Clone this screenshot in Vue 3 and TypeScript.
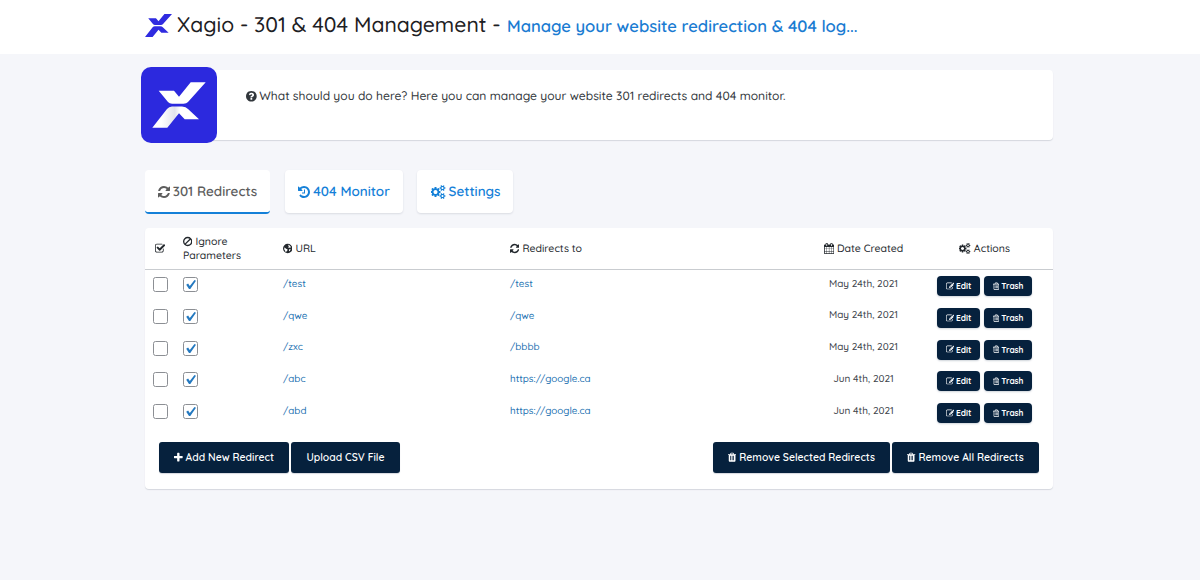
<script setup lang="ts">
import { h, type FunctionalComponent } from 'vue'

interface Glyph { box: string; d: string; ratio: number }

const glyphs: Record<string, Glyph> = {
  refresh: { box: '128 0 1536 1792', ratio: 0.857, d: 'M1639 1056q0 5-1 7-64 268-268 434.5t-478 166.5q-146 0-282.5-55t-243.5-157l-129 129q-19 19-45 19t-45-19-19-45v-448q0-26 19-45t45-19h448q26 0 45 19t19 45-19 45l-137 137q71 66 161 102t187 36q134 0 250-65t186-179q11-17 53-117 8-23 30-23h192q13 0 22.5 9.5t9.5 22.5zm25-800v448q0 26-19 45t-45 19h-448q-26 0-45-19t-19-45 19-45l138-138q-148-137-349-137-134 0-250 65t-186 179q-11 17-53 117-8 23-30 23h-199q-13 0-22.5-9.5t-9.5-22.5v-7q65-268 270-434.5t480-166.5q146 0 284 55.5t245 156.5l130-129q19-19 45-19t45 19 19 45z' },
  history: { box: '128 0 1536 1792', ratio: 0.857, d: 'M1664 896q0 156-61 298t-164 245-245 164-298 61q-172 0-327-72.5t-264-204.5q-7-10-6.5-22.5t8.5-20.5l137-138q10-9 25-9 16 2 23 12 73 95 179 147t225 52q104 0 198.5-40.5t163.5-109.5 109.5-163.5 40.5-198.5-40.5-198.5-109.5-163.5-163.5-109.5-198.5-40.5q-98 0-188 35.5t-160 101.5l137 138q31 30 14 69-17 40-59 40h-448q-26 0-45-19t-19-45v-448q0-42 40-59 39-17 69 14l130 129q107-101 244.5-156.5t284.5-55.5q156 0 298 61t245 164 164 245 61 298zm-640-288v448q0 14-9 23t-23 9h-320q-14 0-23-9t-9-23v-64q0-14 9-23t23-9h224v-352q0-14 9-23t23-9h64q14 0 23 9t9 23z' },
  cogs: { box: '0 0 1920 1792', ratio: 1.071, d: 'M832 896q0-106-75-181t-181-75-181 75-75 181 75 181 181 75 181-75 75-181zm768 512q0-52-38-90t-90-38-90 38-38 90q0 53 37.5 90.5t90.5 37.5 90.5-37.5 37.5-90.5zm0-1024q0-52-38-90t-90-38-90 38-38 90q0 53 37.5 90.5t90.5 37.5 90.5-37.5 37.5-90.5zm-384 421v185q0 10-7 19.5t-16 10.5l-155 24q-11 35-32 76 34 48 90 115 7 11 7 20 0 12-7 19-23 30-82.5 89.5t-78.5 59.5q-11 0-21-7l-115-90q-37 19-77 31-11 108-23 155-7 24-30 24h-186q-11 0-20-7.5t-10-17.5l-23-153q-34-10-75-31l-118 89q-7 7-20 7-11 0-21-8-144-133-144-160 0-9 7-19 10-14 41-53t47-61q-23-44-35-82l-152-24q-10-1-17-9.5t-7-19.5v-185q0-10 7-19.5t16-10.5l155-24q11-35 32-76-34-48-90-115-7-11-7-20 0-12 7-20 22-30 82-89t79-59q11 0 21 7l115 90q34-18 77-32 11-108 23-154 7-24 30-24h186q11 0 20 7.5t10 17.5l23 153q34 10 75 31l118-89q8-7 20-7 11 0 21 8 144 133 144 160 0 8-7 19-12 16-42 54t-45 60q23 48 34 82l152 23q10 2 17 10.5t7 19.5zm640 533v140q0 16-149 31-12 27-30 52 51 113 51 138 0 4-4 7-122 71-124 71-8 0-46-47t-52-68q-20 2-30 2t-30-2q-14 21-52 68t-46 47q-2 0-124-71-4-3-4-7 0-25 51-138-18-25-30-52-149-15-149-31v-140q0-16 149-31 13-29 30-52-51-113-51-138 0-4 4-7 4-2 35-20t59-34 30-16q8 0 46 46.5t52 67.5q20-2 30-2t30 2q51-71 92-112l6-2q4 0 124 70 4 3 4 7 0 25-51 138 17 23 30 52 149 15 149 31zm0-1024v140q0 16-149 31-12 27-30 52 51 113 51 138 0 4-4 7-122 71-124 71-8 0-46-47t-52-68q-20 2-30 2t-30-2q-14 21-52 68t-46 47q-2 0-124-71-4-3-4-7 0-25 51-138-18-25-30-52-149-15-149-31v-140q0-16 149-31 13-29 30-52-51-113-51-138 0-4 4-7 4-2 35-20t59-34 30-16q8 0 46 46.5t52 67.5q20-2 30-2t30 2q51-71 92-112l6-2q4 0 124 70 4 3 4 7 0 25-51 138 17 23 30 52 149 15 149 31z' },
  question: { box: '128 0 1536 1792', ratio: 0.857, d: 'M1024 1376v-192q0-14-9-23t-23-9h-192q-14 0-23 9t-9 23v192q0 14 9 23t23 9h192q14 0 23-9t9-23zm256-672q0-88-55.5-163t-138.5-116-170-41q-243 0-371 213-15 24 8 42l132 100q7 6 19 6 16 0 25-12 53-68 86-92 34-24 86-24 48 0 85.5 26t37.5 59q0 38-20 61t-68 45q-63 28-115.5 86.5t-52.5 125.5v36q0 14 9 23t23 9h192q14 0 23-9t9-23q0-19 21.5-49.5t54.5-49.5q32-18 49-28.5t46-35 44.5-48 28-60.5 12.5-81zm384 192q0 209-103 385.5t-279.5 279.5-385.5 103-385.5-103-279.5-279.5-103-385.5 103-385.5 279.5-279.5 385.5-103 385.5 103 279.5 279.5 103 385.5z' },
  checked: { box: '64 0 1664 1792', ratio: 0.929, d: 'M1472 930v318q0 119-84.5 203.5t-203.5 84.5h-832q-119 0-203.5-84.5t-84.5-203.5v-832q0-119 84.5-203.5t203.5-84.5h832q63 0 117 25 15 7 18 23 3 17-9 29l-49 49q-10 10-23 10-3 0-9-2-23-6-45-6h-832q-66 0-113 47t-47 113v832q0 66 47 113t113 47h832q66 0 113-47t47-113v-254q0-13 9-22l64-64q10-10 23-10 6 0 12 3 20 8 20 29zm231-489l-814 814q-24 24-57 24t-57-24l-430-430q-24-24-24-57t24-57l110-110q24-24 57-24t57 24l263 263 647-647q24-24 57-24t57 24l110 110q24 24 24 57t-24 57z' },
  ban: { box: '128 0 1536 1792', ratio: 0.857, d: 'M896 128a768 768 0 1 0 0 1536a768 768 0 1 0 0-1536zM896 347c115 0 220 35 308 95l-764 762c-58-88-93-194-93-308c0-303 246-549 549-549zM1354 592c58 86 91 190 91 304c0 303-246 549-549 549c-113 0-217-33-304-91z' },
  globe: { box: '128 0 1536 1792', ratio: 0.857, d: 'M896 128a768 768 0 1 0 0 1536a768 768 0 1 0 0-1536zM1010 270l190 60-50 90 100 20 110 140 90 120-110 10-50 90-100-50-130 60-60-130 80-110-90-120zM330 750l190 50 90 120 170 40 100 130-70 160-120 90-30 150-140-80-60-200-110-120zM1190 960l180 40-20 110-130 190-100 60-20-190z' },
  calendar: { box: '64 0 1664 1792', ratio: 0.929, d: 'M192 1664h288v-288h-288v288zm352 0h320v-288h-320v288zm-352-352h288v-320h-288v320zm352 0h320v-320h-320v320zm-352-384h288v-288h-288v288zm736 736h320v-288h-320v288zm-384-736h320v-288h-320v288zm768 736h288v-288h-288v288zm-384-352h320v-320h-320v320zm-352-864v-288q0-13-9.5-22.5t-22.5-9.5h-64q-13 0-22.5 9.5t-9.5 22.5v288q0 13 9.5 22.5t22.5 9.5h64q13 0 22.5-9.5t9.5-22.5zm736 864h288v-320h-288v320zm-384-384h320v-288h-320v288zm384 0h288v-288h-288v288zm32-480v-288q0-13-9.5-22.5t-22.5-9.5h-64q-13 0-22.5 9.5t-9.5 22.5v288q0 13 9.5 22.5t22.5 9.5h64q13 0 22.5-9.5t9.5-22.5zm384-64v1280q0 52-38 90t-90 38h-1408q-52 0-90-38t-38-90v-1280q0-52 38-90t90-38h128v-96q0-66 47-113t113-47h64q66 0 113 47t47 113v96h384v-96q0-66 47-113t113-47h64q66 0 113 47t47 113v96h128q52 0 90 38t38 90z' },
  edit: { box: '0 0 1792 1792', ratio: 1, d: 'M888 1184l116-116-152-152-116 116v56h96v96h56zm440-720q-16-16-33 1l-350 350q-17 17-1 33t33-1l350-350q17-17 1-33zm80 594v190q0 119-84.5 203.5t-203.5 84.5h-832q-119 0-203.5-84.5t-84.5-203.5v-832q0-119 84.5-203.5t203.5-84.5h832q63 0 117 25 15 7 18 23 3 17-9 29l-49 49q-14 14-32 8-23-6-45-6h-832q-66 0-113 47t-47 113v832q0 66 47 113t113 47h832q66 0 113-47t47-113v-126q0-13 9-22l64-64q15-15 35-7t20 29zm-96-738l288 288-672 672h-288v-288zm444 132l-92 92-288-288 92-92q28-28 68-28t68 28l152 152q28 28 28 68t-28 68z' },
  trashOutline: { box: '192 0 1408 1792', ratio: 0.786, d: 'M704 736v576q0 14-9 23t-23 9h-64q-14 0-23-9t-9-23v-576q0-14 9-23t23-9h64q14 0 23 9t9 23zm256 0v576q0 14-9 23t-23 9h-64q-14 0-23-9t-9-23v-576q0-14 9-23t23-9h64q14 0 23 9t9 23zm256 0v576q0 14-9 23t-23 9h-64q-14 0-23-9t-9-23v-576q0-14 9-23t23-9h64q14 0 23 9t9 23zm128 724v-948h-896v948q0 22 7 40.5t14.5 27 10.5 8.5h832q3 0 10.5-8.5t14.5-27 7-40.5zm-672-1076h448l-48-117q-7-9-17-11h-317q-10 2-17 11zm928 32v64q0 14-9 23t-23 9h-96v948q0 83-47 143.5t-113 60.5h-832q-66 0-113-58.5t-47-141.5v-952h-96q-14 0-23-9t-9-23v-64q0-14 9-23t23-9h309l70-167q15-37 54-63t79-26h320q40 0 79 26t54 63l70 167h309q14 0 23 9t9 23z' },
  trash: { box: '192 0 1408 1792', ratio: 0.786, d: 'M704 1376v-704q0-14-9-23t-23-9h-64q-14 0-23 9t-9 23v704q0 14 9 23t23 9h64q14 0 23-9t9-23zm256 0v-704q0-14-9-23t-23-9h-64q-14 0-23 9t-9 23v704q0 14 9 23t23 9h64q14 0 23-9t9-23zm256 0v-704q0-14-9-23t-23-9h-64q-14 0-23 9t-9 23v704q0 14 9 23t23 9h64q14 0 23-9t9-23zm-544-992h448l-48-117q-7-9-17-11h-317q-10 2-17 11zm928 32v64q0 14-9 23t-23 9h-96v948q0 83-47 143.5t-113 60.5h-832q-66 0-113-58.5t-47-141.5v-952h-96q-14 0-23-9t-9-23v-64q0-14 9-23t23-9h309l70-167q15-37 54-63t79-26h320q40 0 79 26t54 63l70 167h309q14 0 23 9t9 23z' },
  plus: { box: '192 0 1408 1792', ratio: 0.786, d: 'M1600 736v192q0 40-28 68t-68 28h-416v416q0 40-28 68t-68 28h-192q-40 0-68-28t-28-68v-416h-416q-40 0-68-28t-28-68v-192q0-40 28-68t68-28h416v-416q0-40 28-68t68-28h192q40 0 68 28t28 68v416h416q40 0 68 28t28 68z' },
}

const Icon: FunctionalComponent<{ name: string; size: number }> = (props) => {
  const g = glyphs[props.name]
  return h('svg', { viewBox: g.box, width: props.size * g.ratio, height: props.size, fill: 'currentColor' },
    [h('path', { d: g.d, 'fill-rule': 'evenodd' })])
}
Icon.props = ['name', 'size']

const rows = [
  { url: '/test', target: '/test', date: 'May 24th, 2021' },
  { url: '/qwe', target: '/qwe', date: 'May 24th, 2021' },
  { url: '/zxc', target: '/bbbb', date: 'May 24th, 2021' },
  { url: '/abc', target: 'https://google.ca', date: 'Jun 4th, 2021' },
  { url: '/abd', target: 'https://google.ca', date: 'Jun 4th, 2021' },
]
</script>

<template>
  <div class="page">
    <header class="topbar">
      <svg class="mark" width="27" height="23" viewBox="11.3 15.3 53.4 45.4" preserveAspectRatio="none">
        <path fill="#2f2be0" d="M49.7 15.3H64.7L47 35Q45.500 37 42.500 37H31Q28.500 37 27 35L17.700 23.700H33L38 29.700ZM11.300 60.700L26 42Q28 39.500 31 39.500H41Q45 39.500 47 42L58 52.300H43.700L38 46.300L26.300 60.700Z" />
      </svg>
      <h1 class="title">Xagio - 301 &amp; 404 Management -</h1>
      <span class="subtitle">Manage your website redirection &amp; 404 log...</span>
    </header>

    <main class="content">
      <section class="intro">
        <svg class="tile" width="76" height="76" viewBox="0 0 76 76">
          <defs>
            <linearGradient id="fold" x1="0" y1="0" x2="1" y2="0">
              <stop offset="0.2" stop-color="#fff" />
              <stop offset="0.48" stop-color="#e2e3ec" />
              <stop offset="0.6" stop-color="#fff" />
            </linearGradient>
          </defs>
          <rect width="76" height="76" rx="10" fill="#2c29de" />
          <path fill="#fff" d="M49.700 15.300H64.700L47 35Q45.500 36.800 42.500 36.800H31Q28.500 36.800 27 35L17.700 23.700H33L38 29.700Z" />
          <path fill="url(#fold)" d="M11.300 60.700L26 42Q28 39.500 31 39.500H41Q45 39.500 47 42L58 52.300H43.700L38 46.300L26.300 60.700Z" />
        </svg>
        <p class="intro-text"><Icon name="question" :size="12.500" /><span>What should you do here? Here you can manage your website 301 redirects and 404 monitor.</span></p>
      </section>

      <nav class="tabs">
        <a class="tab tab-redirects"><Icon name="refresh" :size="14" /><span>301 Redirects</span></a>
        <a class="tab tab-monitor"><Icon name="history" :size="14" /><span>404 Monitor</span></a>
        <a class="tab tab-settings"><Icon name="cogs" :size="14" /><span>Settings</span></a>
      </nav>

      <section class="panel">
        <div class="line head">
          <div class="cell pick"><Icon name="checked" :size="11" /></div>
          <div class="cell ignore"><span class="pair"><Icon name="ban" :size="11" />Ignore</span><span>Parameters</span></div>
          <div class="cell"><Icon name="globe" :size="11" /><span>URL</span></div>
          <div class="cell"><Icon name="refresh" :size="11" /><span>Redirects to</span></div>
          <div class="cell mid"><Icon name="calendar" :size="11" /><span>Date Created</span></div>
          <div class="cell mid"><Icon name="cogs" :size="11" /><span>Actions</span></div>
        </div>
        <div v-for="(row, i) in rows" :key="i" class="line row">
          <div class="cell pick"><i class="box"></i></div>
          <div class="cell"><i class="box"><svg width="13" height="13" viewBox="0 0 13 13"><path d="M2.200 6.700L4.100 5.600L5.800 7.900L10.500 1.900L12 2.800L6.300 11H5Z" fill="#2479c0" /></svg></i></div>
          <div class="cell link">{{ row.url }}</div>
          <div class="cell link">{{ row.target }}</div>
          <div class="cell mid date">{{ row.date }}</div>
          <div class="cell mid acts">
            <button class="mini edit"><Icon name="edit" :size="8.500" /><span>Edit</span></button>
            <button class="mini del"><Icon name="trashOutline" :size="8.500" /><span>Trash</span></button>
          </div>
        </div>
        <footer class="foot">
          <button class="btn add"><Icon name="plus" :size="11" /><span>Add New Redirect</span></button>
          <button class="btn upload"><span>Upload CSV File</span></button>
          <button class="btn selected"><Icon name="trash" :size="10.500" /><span>Remove Selected Redirects</span></button>
          <button class="btn all"><Icon name="trash" :size="10.500" /><span>Remove All Redirects</span></button>
        </footer>
      </section>
    </main>
  </div>
</template>

<style>
body { background: #f5f6fa; }
</style>

<style scoped>
.page {
  width: 1200px;
  height: 580px;
  overflow: hidden;
  background: #f5f6fa;
  color: #23282d;
  font-family: Quicksand, Lato, "Open Sans", sans-serif;
  font-weight: 500;
  white-space: nowrap;
  text-rendering: geometricPrecision;
}
.page * { box-sizing: border-box; }
svg { flex: none; display: block; }
.topbar { height: 54px; background: #fff; display: flex; align-items: center; padding: 0 0 4px 145px; }
.mark { margin-right: 5px; }
.title { margin: 0; width: 330px; font-size: 21.2px; font-weight: 500; line-height: 28px; color: #1d2023; }
.subtitle { font-size: 16.63px; font-weight: 600; line-height: 22px; color: #1a7cd2; padding-top: 3px; }
.content { width: 908px; margin: 16px 0 0 145px; }
.intro { height: 70px; background: #fff; border-radius: 4px; box-shadow: 0 1px 1px #d5d8de; display: flex; }
.tile { margin: -3px 0 0 -4px; }
.intro-text { display: flex; align-items: center; gap: 2.5px; height: 20px; margin: 16px 0 0 29px; font-size: 12.08px; color: #32373c; }
.tabs { display: flex; margin-top: 30px; height: 43px; }
.tab { display: flex; align-items: center; justify-content: center; gap: 3px; background: #fff; border-radius: 4px; font-size: 13.45px; font-weight: 600; color: #1480d8; box-shadow: 0 1px 2px #d9dce2; }
.tab-redirects { width: 125px; height: 44px; margin-right: 15px; padding-top: 1px; color: #5d5d5d; border-bottom: 2px solid #1480d8; box-shadow: none; }
.tab-monitor { width: 118px; margin-right: 14px; }
.tab-settings { width: 96px; padding-left: 1px; }
.panel { margin-top: 15px; height: 261px; background: #fff; border-radius: 4px; box-shadow: 0 1px 1px #d5d8de; }
.line { display: grid; grid-template-columns: 30px 100px 227px 309px 105px 137px; }
.cell { display: flex; align-items: center; padding-left: 8px; gap: 3px; }
.cell.pick, .cell.mid { padding-left: 0; justify-content: center; }
.head { height: 42px; padding-bottom: 1px; border-bottom: 1px solid #c9ccd0; font-size: 10.55px; }
.ignore { flex-direction: column; align-items: flex-start; justify-content: center; gap: 0; line-height: 14px; }
.pair { display: flex; align-items: center; gap: 3px; }
.row { height: 31.75px; font-size: 10px; }
.row .cell { height: 29px; }
.row .link { height: 27.5px; }
.row .date { height: 26px; }
.link { color: #2271b1; font-size: 9.85px; }
.date { color: #3c434a; }
.box { width: 15px; height: 15px; border: 1px solid #8c8f94; border-radius: 2.5px; background: #fff; }
button { border: 0; padding: 0; background: #06213d; color: #fff; font-family: inherit; font-weight: 600; display: flex; align-items: center; justify-content: center; }
.row .acts { height: 32px; gap: 4px; }
.mini { height: 20px; font-size: 8.3px; font-weight: 700; border-radius: 4px; gap: 2px; box-shadow: 0 1px 2px #cfd4da; }
.edit { width: 43px; }
.del { width: 48px; }
.foot { display: flex; margin-top: 13px; padding: 0 14px; gap: 2px; }
.btn { height: 31px; border-radius: 3px; font-size: 10.4px; gap: 3px; box-shadow: 0 1px 1px #d5d8de; }
.add { width: 130px; }
.upload { width: 109px; margin-right: auto; }
.selected { width: 177px; }
.all { width: 147px; }
</style>
